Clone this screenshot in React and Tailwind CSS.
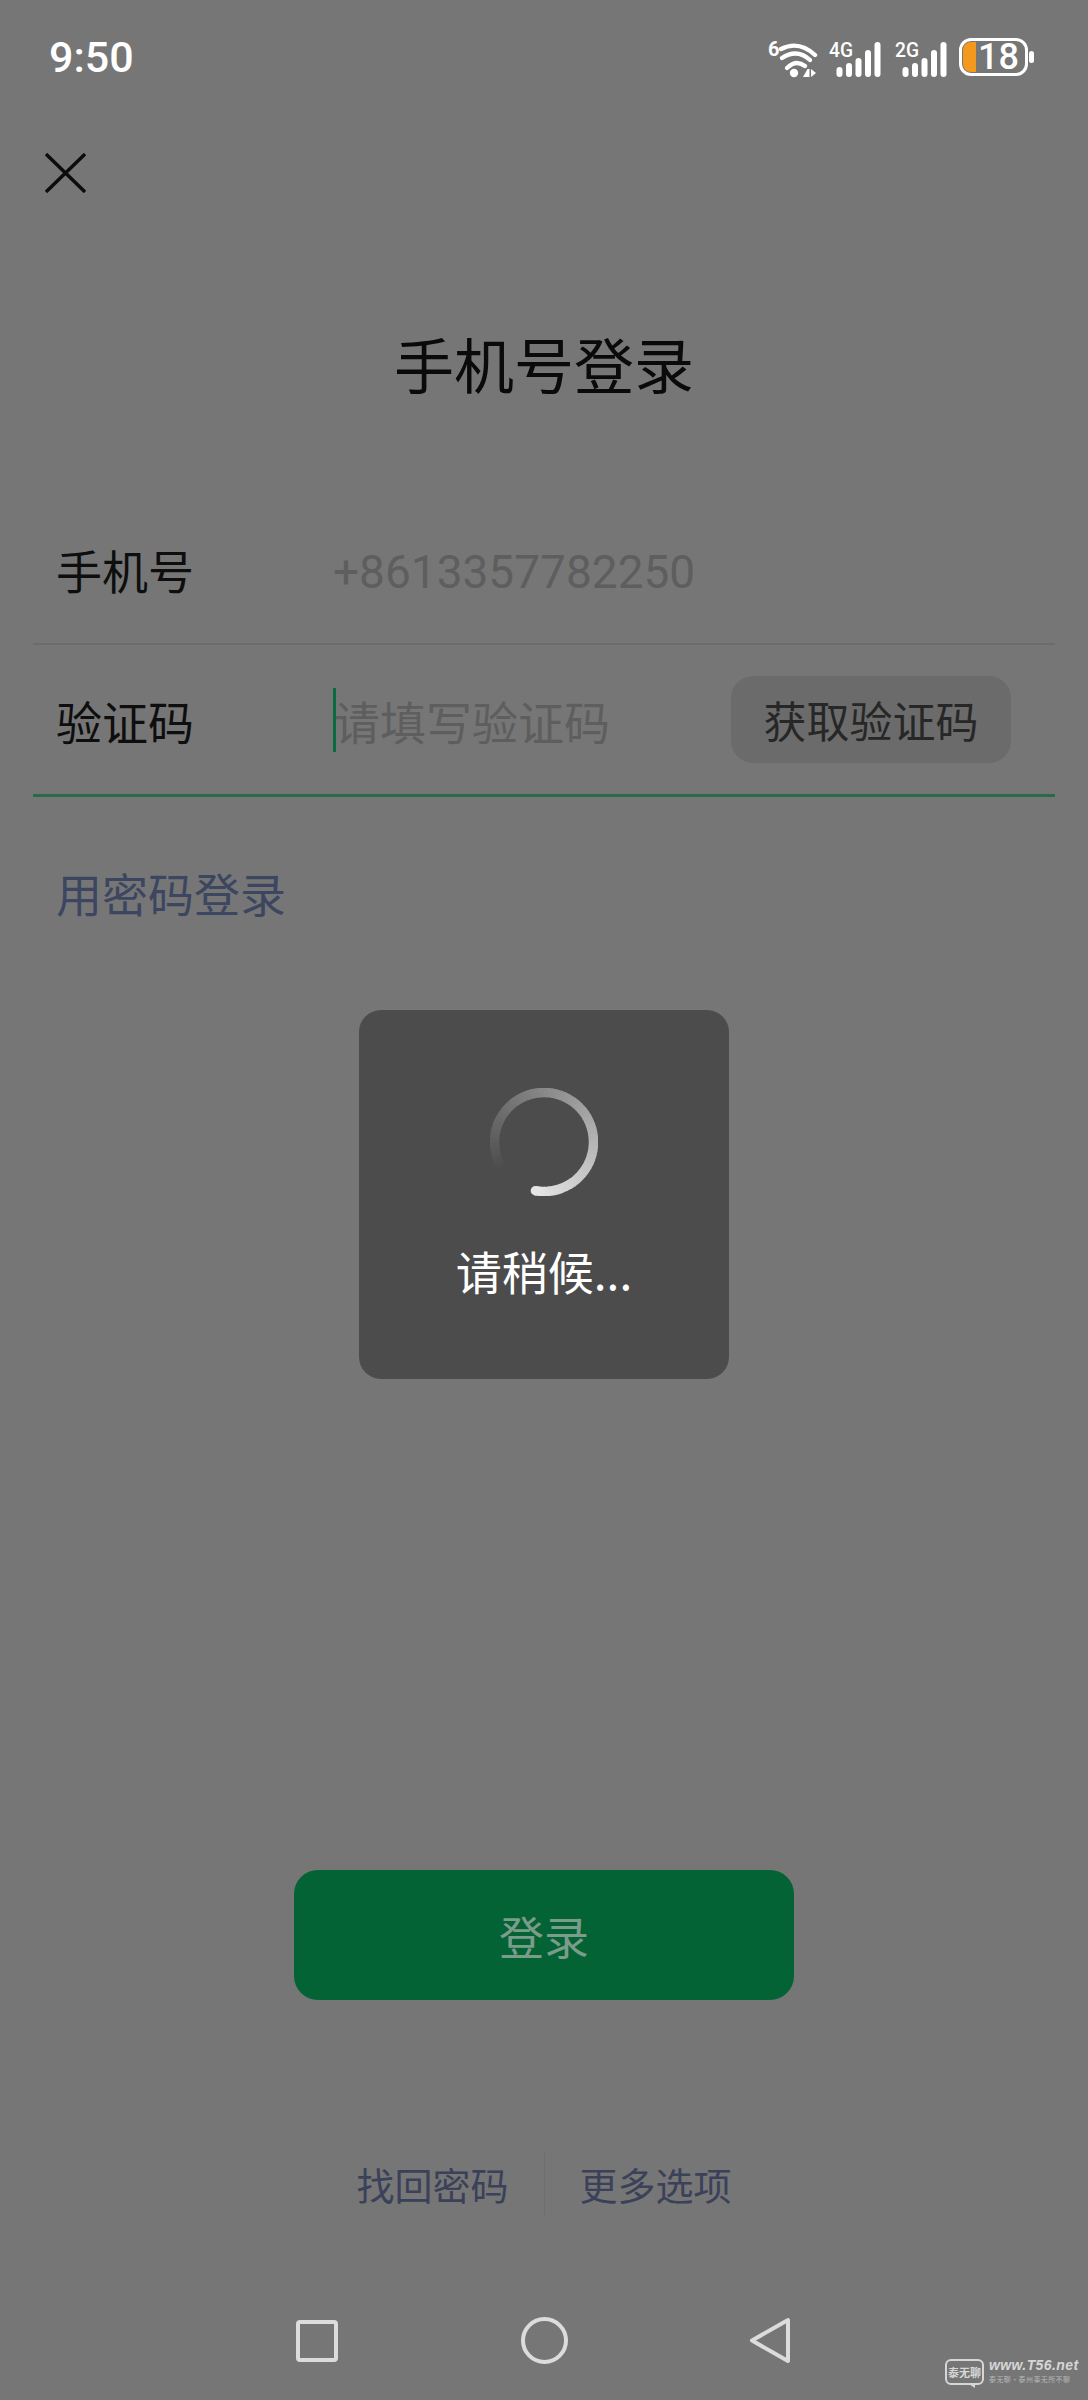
const cjk = "font-['Noto_Sans_CJK_SC','Noto_Sans',sans-serif]";

const Wifi = () => (
  <svg width="50" height="41" viewBox="0 -4 50 41" fill="none">
    <text x="0" y="15" fontSize="20" fontWeight="700" fill="#fff" fontFamily="Roboto, sans-serif">6</text>
    <g stroke="#fff" strokeWidth="4.4" strokeLinecap="round">
      <path d="M13 8 Q31 -1 47 14" />
      <path d="M14 17 Q29 7 42 19" />
      <path d="M19 27 Q28 18 37 25" />
    </g>
    <circle cx="26" cy="32" r="4.2" fill="#fff" />
    <path d="M35 36 L39.5 28 L41.5 28 L41.5 36 Z M43 28 L48 32 L43 36 Z" fill="#fff" />
  </svg>
);

const Signal = ({ label }) => {
  const bars = [
    { x: 8, h: 10 },
    { x: 17.5, h: 14 },
    { x: 27, h: 19 },
    { x: 36.5, h: 27 },
    { x: 46, h: 35 },
  ];
  return (
    <svg width="52" height="41" viewBox="0 -4 52 41">
      <text x="0" y="16" fontSize="21" fontWeight="500" fill="#fff" fontFamily="Roboto, sans-serif" textLength="24" lengthAdjust="spacingAndGlyphs">{label}</text>
      {bars.map(b => (
        <rect key={b.x} x={b.x - 0.5} y={36 - b.h} width="6" height={b.h} rx="3" fill="#fff" />
      ))}
    </svg>
  );
};

const Battery = () => (
  <div className="flex items-center gap-px">
    <div className="w-[69px] h-[38px] border-[3px] border-white rounded-[12px] flex items-center pl-px">
      <div className="w-[13px] h-[30px] bg-[#f39a1e] rounded-l-[8px]"></div>
      <span className="ml-[2px] text-[36px] leading-none font-medium text-white font-['Roboto',sans-serif]">18</span>
    </div>
    <div className="w-[5px] h-[12px] bg-white rounded-full"></div>
  </div>
);

const Spinner = () => {
  const r = 49.5;
  const start = 100; // degrees clockwise from east: where the bright head sits
  const sweep = 310;
  const steps = 62;
  const point = a => [
    54 + r * Math.cos((a * Math.PI) / 180),
    54 + r * Math.sin((a * Math.PI) / 180),
  ];
  const segments = Array.from({ length: steps }, (_, i) => {
    const a0 = start - (i * sweep) / steps;
    const a1 = start - ((i + 1.15) * sweep) / steps;
    const [x0, y0] = point(a0);
    const [x1, y1] = point(a1);
    const t = 1 - i / steps;
    const v = Math.round(76 + (228 - 76) * t);
    return { d: `M${x0} ${y0} A${r} ${r} 0 0 0 ${x1} ${y1}`, color: `rgb(${v},${v},${v})` };
  }).reverse();
  const [hx, hy] = point(start);
  return (
    <svg width="108" height="108" viewBox="0 0 108 108" fill="none">
      {segments.map((s, i) => (
        <path key={i} d={s.d} stroke={s.color} strokeWidth="9.5" />
      ))}
      <circle cx={hx} cy={hy} r="4.75" fill="#e4e4e4" />
    </svg>
  );
};

const Logo = () => (
  <div className="absolute left-[945px] top-[2357px] flex gap-[5px] text-[#d6d6d6]">
    <div className="relative w-[39px] h-[26px] mt-[2px] border-2 border-[#d6d6d6] rounded-[6px] flex items-center justify-center">
      <span className={`${cjk} text-[11px] leading-none font-bold whitespace-nowrap`}>泰无聊</span>
      <div className="absolute left-[20px] -bottom-[5px] w-0 h-0 border-t-[5px] border-t-[#d6d6d6] border-l-[8px] border-l-transparent"></div>
    </div>
    <div className="flex flex-col">
      <span className="text-[14px] leading-[17px] font-bold italic tracking-[0.4px] font-['Liberation_Sans',sans-serif]">www.T56.net</span>
      <span className={`${cjk} text-[7px] leading-[11px] tracking-[0.4px] whitespace-nowrap text-[#b8b8b8]`}>泰无聊·泰州事无所不聊</span>
    </div>
  </div>
);

const App = () => {
  return (
    <div className={`relative w-[1088px] h-[2400px] overflow-hidden bg-[#767676] flex flex-col ${cjk}`}>
      {/* status bar */}
      <div className="h-[114px] flex items-center justify-between pl-[49px] pr-[54px]">
        <span className="text-[43px] leading-none font-medium text-white font-['Roboto',sans-serif]">9:50</span>
        <div className="flex items-center">
          <Wifi />
          <div className="ml-[11px]"><Signal label="4G" /></div>
          <div className="ml-[14px]"><Signal label="2G" /></div>
          <div className="ml-[12px]"><Battery /></div>
        </div>
      </div>

      <div className="mt-[39px] pl-[45px] h-[40px]">
        <svg width="41" height="40" viewBox="0 0 41 40" stroke="#0c0c0c" strokeWidth="3.4" fill="none">
          <path d="M1 1 L40 39 M40 1 L1 39" />
        </svg>
      </div>

      <div className="mt-[120px] h-[100px] flex items-center justify-center text-[60px] leading-none text-[#0a0a0a]">
        手机号登录
      </div>

      {/* form */}
      <div className="mx-[33px] mt-[82px]">
        <div className="h-[150px] border-b-2 border-[#6c6c6c] flex items-center pl-[23px]">
          <span className="w-[277px] text-[46px] leading-none text-[#0e0e0e]">手机号</span>
          <span className="mt-[5px] text-[46px] leading-none text-[#5e5e5e] font-['Roboto',sans-serif]">+8613357782250</span>
        </div>
        <div className="h-[152px] border-b-[3px] border-[#2a6a4c] flex items-center pl-[23px] pr-[44px]">
          <span className="w-[277px] text-[46px] leading-none text-[#0e0e0e]">验证码</span>
          <div className="w-[3px] h-[64px] bg-[#0a6a40]"></div>
          <span className="flex-1 text-[46px] leading-none text-[#5e5e5e] -ml-[2px]">请填写验证码</span>
          <div className="w-[280px] h-[87px] bg-[#6b6b6b] rounded-[22px] flex items-center justify-center text-[43px] leading-none text-[#272727]">
            获取验证码
          </div>
        </div>
      </div>

      <div className="mt-[65px] h-[60px] pl-[56px] flex items-center text-[46px] leading-none text-[#3c4660]">
        用密码登录
      </div>

      <button className="mt-[948px] self-center w-[500px] h-[130px] bg-[#046335] rounded-[24px] flex items-center justify-center text-[45px] leading-none text-[#7b9c8a]">
        登录
      </button>

      <div className="mt-[151px] h-[65px] flex items-center justify-center gap-[35px] text-[38px] leading-none text-[#3a4159]">
        <span>找回密码</span>
        <div className="w-px h-[65px] bg-[#6e6e6e]"></div>
        <span>更多选项</span>
      </div>

      {/* nav bar */}
      <div className="mt-[101px] h-[47px] flex items-center justify-center gap-[179px]">
        <svg width="47" height="47" viewBox="0 0 47 47" fill="none" stroke="#dcdcdc" strokeWidth="4" strokeLinejoin="round">
          <rect x="3" y="5" width="38" height="38" rx="2" />
        </svg>
        <svg width="47" height="47" viewBox="0 0 47 47" fill="none" stroke="#dcdcdc" strokeWidth="4">
          <circle cx="23.5" cy="23.5" r="21.5" />
        </svg>
        <svg width="47" height="47" viewBox="0 0 47 47" fill="none" stroke="#dcdcdc" strokeWidth="4" strokeLinejoin="round">
          <path d="M41 3 L41 44 L5 23.5 Z" />
        </svg>
      </div>

      {/* loading dialog */}
      <div className="absolute left-[359px] top-[1010px] w-[370px] h-[369px] bg-[#4c4c4c] rounded-[22px] flex flex-col items-center pt-[78px]">
        <Spinner />
        <span className="mt-[38px] text-[46px] leading-[72px] text-white">请稍候...</span>
      </div>

      <Logo />
    </div>
  );
};

export default App;
